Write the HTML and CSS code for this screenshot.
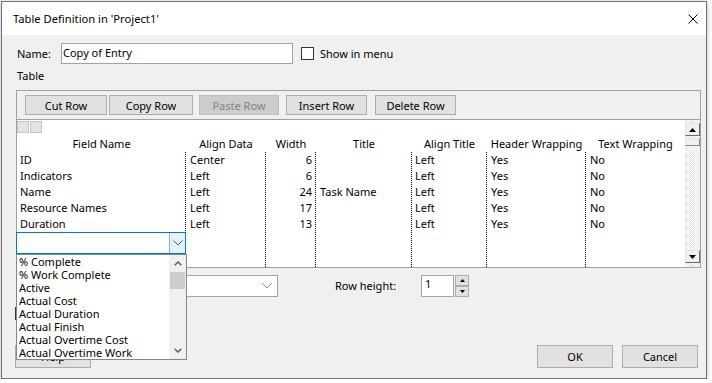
FILE: index.html
```html
<!DOCTYPE html>
<html lang="en">
<head>
    <meta charset="UTF-8">
    <meta name="viewport" content="width=device-width, initial-scale=1.0">
    <title>Table Definition</title>
    <link rel="stylesheet" href="styles.css">
</head>
<body>
    <div class="window">
        <div class="titlebar">
            <span class="title">Table Definition in 'Project1'</span>
            <svg class="close" width="10" height="10" viewBox="0 0 10 10">
                <path d="M0.5 0.5L9.5 9.5M9.5 0.5L0.5 9.5" stroke="#000" stroke-width="1" fill="none"/>
            </svg>
        </div>
        <div class="content">
            <div class="name-row">
                <span class="name-label">Name:</span>
                <div class="textbox name-box">Copy of Entry</div>
                <span class="checkbox"></span>
                <span class="check-label">Show in menu</span>
            </div>
            <div class="section-label">Table</div>

            <div class="frame">
                <div class="toolbar">
                    <button class="btn cut">Cut Row</button>
                    <button class="btn copy">Copy Row</button>
                    <button class="btn paste" disabled>Paste Row</button>
                    <button class="btn insert">Insert Row</button>
                    <button class="btn delete">Delete Row</button>
                </div>
                <div class="grid">
                    <div class="grid-main">
                        <div class="corner"><span class="sq"></span><span class="sq"></span></div>
                        <div class="cols">
                            <div class="col c1">
                                <div class="head">Field Name</div>
                                <div class="cells">
                                    <div class="cell">ID</div>
                                    <div class="cell">Indicators</div>
                                    <div class="cell">Name</div>
                                    <div class="cell">Resource Names</div>
                                    <div class="cell">Duration</div>
                                </div>
                            </div>
                            <div class="col c2">
                                <div class="head">Align Data</div>
                                <div class="cells">
                                    <div class="cell">Center</div>
                                    <div class="cell">Left</div>
                                    <div class="cell">Left</div>
                                    <div class="cell">Left</div>
                                    <div class="cell">Left</div>
                                </div>
                            </div>
                            <div class="col c3">
                                <div class="head">Width</div>
                                <div class="cells">
                                    <div class="cell">6</div>
                                    <div class="cell">6</div>
                                    <div class="cell">24</div>
                                    <div class="cell">17</div>
                                    <div class="cell">13</div>
                                </div>
                            </div>
                            <div class="col c4">
                                <div class="head">Title</div>
                                <div class="cells">
                                    <div class="cell"></div>
                                    <div class="cell"></div>
                                    <div class="cell">Task Name</div>
                                    <div class="cell"></div>
                                    <div class="cell"></div>
                                </div>
                            </div>
                            <div class="col c5">
                                <div class="head">Align Title</div>
                                <div class="cells">
                                    <div class="cell">Left</div>
                                    <div class="cell">Left</div>
                                    <div class="cell">Left</div>
                                    <div class="cell">Left</div>
                                    <div class="cell">Left</div>
                                </div>
                            </div>
                            <div class="col c6">
                                <div class="head">Header Wrapping</div>
                                <div class="cells">
                                    <div class="cell">Yes</div>
                                    <div class="cell">Yes</div>
                                    <div class="cell">Yes</div>
                                    <div class="cell">Yes</div>
                                    <div class="cell">Yes</div>
                                </div>
                            </div>
                            <div class="col c7">
                                <div class="head">Text Wrapping</div>
                                <div class="cells">
                                    <div class="cell">No</div>
                                    <div class="cell">No</div>
                                    <div class="cell">No</div>
                                    <div class="cell">No</div>
                                    <div class="cell">No</div>
                                </div>
                            </div>
                        </div>
                    </div>
                    <div class="vscroll">
                        <div class="sbtn">
                            <svg width="7" height="4" viewBox="0 0 7 4"><path d="M0 4H7L3.5 0Z" fill="#000"/></svg>
                        </div>
                        <div class="sthumb"></div>
                        <div class="strack"></div>
                        <div class="sbtn">
                            <svg width="7" height="4" viewBox="0 0 7 4"><path d="M0 0H7L3.5 4Z" fill="#000"/></svg>
                        </div>
                    </div>

                    <!-- cell editor with its open list -->
                    <div class="editor">
                        <div class="editor-text"></div>
                        <div class="editor-btn">
                            <svg width="10" height="6" viewBox="0 0 10 6"><polyline points="0.5,0.5 5,5 9.5,0.5" fill="none" stroke="#5a5a5a" stroke-width="1"/></svg>
                        </div>
                    </div>
                    <div class="dropdown">
                        <div class="items">
                            <div class="item">% Complete</div>
                            <div class="item">% Work Complete</div>
                            <div class="item">Active</div>
                            <div class="item">Actual Cost</div>
                            <div class="item">Actual Duration</div>
                            <div class="item">Actual Finish</div>
                            <div class="item">Actual Overtime Cost</div>
                            <div class="item">Actual Overtime Work</div>
                        </div>
                        <div class="list-scroll">
                            <div class="lbtn">
                                <svg width="8" height="5" viewBox="0 0 8 5"><polyline points="0.7,4.3 4,1 7.3,4.3" fill="none" stroke="#606060" stroke-width="1.5"/></svg>
                            </div>
                            <div class="lthumb"></div>
                            <div class="ltrack"></div>
                            <div class="lbtn">
                                <svg width="8" height="5" viewBox="0 0 8 5"><polyline points="0.7,0.7 4,4 7.3,0.7" fill="none" stroke="#606060" stroke-width="1.5"/></svg>
                            </div>
                        </div>
                    </div>
                </div>
            </div>

            <div class="options-row">
                <div class="combo">
                    <svg width="10" height="6" viewBox="0 0 10 6"><polyline points="0.5,0.5 5,5 9.5,0.5" fill="none" stroke="#8a8a8a" stroke-width="1"/></svg>
                </div>
                <span class="row-label">Row height:</span>
                <div class="textbox spin-input">1</div>
                <div class="spin">
                    <div class="spin-btn">
                        <svg width="5" height="3" viewBox="0 0 5 3"><path d="M0 3H5L2.5 0Z" fill="#000"/></svg>
                    </div>
                    <div class="spin-btn">
                        <svg width="5" height="3" viewBox="0 0 5 3"><path d="M0 0H5L2.5 3Z" fill="#000"/></svg>
                    </div>
                </div>
            </div>

            <div class="check-row">
                <span class="checkbox"></span>
            </div>

            <div class="button-row">
                <button class="btn dlg help">Help</button>
                <div class="right-buttons">
                    <button class="btn dlg">OK</button>
                    <button class="btn dlg">Cancel</button>
                </div>
            </div>
        </div>
    </div>
</body>
</html>
```

FILE: styles.css
```css
* {
    margin: 0;
    padding: 0;
    box-sizing: border-box;
}

body {
    font-family: "Noto Sans", sans-serif;
    font-size: 11px;
    line-height: 16px;
    color: #000;
    background-color: #fff;
}

.window {
    width: 706px;
    height: 378px;
    margin: 1px 0 0 1px;
    border: 1px solid #707070;
    background-color: #f0f0f0;
    box-shadow: 0 1px 6px rgba(0, 0, 0, 0.25);
}

.titlebar {
    height: 33px;
    background-color: #fff;
    display: flex;
    align-items: center;
    justify-content: space-between;
    padding: 0 8px 0 11px;
}

.title {
    font-size: 11.2px;
}

.content {
    padding: 8px 5px 0 14px;
}

/* name row */
.name-row {
    display: flex;
    align-items: center;
    height: 21px;
}

.name-label {
    width: 44px;
    margin-left: 1px;
}

.textbox {
    background-color: #fff;
    border: 1px solid #a3a3a3;
}

.name-box {
    width: 232px;
    height: 21px;
    padding-left: 1px;
    line-height: 17px;
}

.checkbox {
    display: inline-block;
    width: 13px;
    height: 13px;
    border: 1px solid #333;
    background-color: #fff;
}

.name-row .checkbox {
    margin-left: 8px;
}

.check-label {
    margin-left: 6px;
}

.section-label {
    margin-top: 4px;
    margin-left: 1px;
}

/* table frame */
.frame {
    margin-top: 6px;
    border: 1px solid #a0a0a0;
}

.toolbar {
    height: 28px;
    display: flex;
    padding: 4px 0 0 8px;
}

.btn {
    font-family: inherit;
    font-size: 11px;
    height: 20px;
    background-color: #e1e1e1;
    border: 1px solid #adadad;
    color: #000;
}

.btn:disabled {
    background-color: #cccccc;
    border-color: #bfbfbf;
    color: #838383;
}

.cut { width: 82px; }
.copy { width: 84px; margin-left: 2px; }
.paste { width: 80px; margin-left: 6px; }
.insert { width: 81px; margin-left: 7px; }
.delete { width: 81px; margin-left: 8px; }

.grid {
    position: relative;
    display: flex;
    height: 148px;
    border-top: 1px solid #a0a0a0;
    background-color: #fff;
}

.grid-main {
    flex: 1;
    display: flex;
    flex-direction: column;
}

.corner {
    height: 16px;
    display: flex;
    gap: 1px;
    padding-top: 1px;
}

.sq {
    width: 12px;
    height: 12px;
    background-color: #e4e4e4;
    border: 1px solid #c4c4c4;
}

.cols {
    flex: 1;
    display: flex;
}

.col {
    display: flex;
    flex-direction: column;
}

.head {
    height: 16px;
    text-align: center;
    white-space: nowrap;
}

.cells {
    flex: 1;
    border-right: 1px dotted #000;
}

.cell {
    height: 16px;
    white-space: nowrap;
}

.c1 { width: 169px; }
.c2 { width: 80px; }
.c3 { width: 50px; }
.c4 { width: 96px; }
.c5 { width: 75px; }
.c6 { width: 99px; }
.c7 { flex: 1; }

.c1 .cell { padding-left: 3px; }
.c2 .cell { padding-left: 4px; }
.c3 .cell { padding-right: 3px; text-align: right; }
.c4 .cell { padding-left: 4px; }
.c5 .cell { padding-left: 3px; }
.c6 .cell { padding-left: 4px; }
.c7 .cell { padding-left: 4px; }

.c7 .cells {
    border-right: none;
}

/* classic scrollbar of the grid */
.vscroll {
    width: 15px;
    display: flex;
    flex-direction: column;
    padding: 3px 0 4px;
    background: repeating-conic-gradient(#fff 0 25%, #e6e6e6 0 50%) 0 0 / 2px 2px;
}

.sbtn {
    height: 13px;
    display: flex;
    align-items: center;
    justify-content: center;
    background-color: #f0f0f0;
    border: 1px solid;
    border-color: #e3e3e3 #696969 #696969 #e3e3e3;
}

.sthumb {
    height: 8px;
    margin-top: 2px;
    background-color: #f0f0f0;
    border: 1px solid;
    border-color: #e3e3e3 #8a8a8a #8a8a8a #e3e3e3;
}

.strack {
    flex: 1;
}

/* floating editor over the grid */
.editor {
    position: absolute;
    top: 112px;
    left: -1px;
    width: 170px;
    height: 22px;
    display: flex;
    border: 1px solid #0078d7;
    background-color: #fff;
    z-index: 5;
}

.editor-text {
    flex: 1;
}

.editor-btn {
    width: 16px;
    display: flex;
    align-items: center;
    justify-content: center;
    background-color: #e5f1fb;
    border-left: 1px solid #7eb4ea;
}

.dropdown {
    position: absolute;
    top: 134px;
    left: -1px;
    width: 171px;
    height: 106px;
    display: flex;
    border: 1px solid #828790;
    background-color: #fff;
    z-index: 10;
}

.items {
    flex: 1;
}

.item {
    height: 13px;
    line-height: 13px;
    padding-left: 2px;
    white-space: nowrap;
}

.list-scroll {
    width: 17px;
    display: flex;
    flex-direction: column;
    background-color: #f0f0f0;
}

.lbtn {
    height: 17px;
    display: flex;
    align-items: center;
    justify-content: center;
}

.lthumb {
    height: 17px;
    margin: 0 1px;
    background-color: #cdcdcd;
}

.ltrack {
    flex: 1;
}

/* options under the table */
.options-row {
    display: flex;
    align-items: center;
    height: 22px;
    margin-top: 7px;
}

.combo {
    width: 178px;
    height: 22px;
    margin-left: 84px;
    display: flex;
    align-items: center;
    justify-content: flex-end;
    padding-right: 5px;
    background-color: #fff;
    border: 1px solid #a3a3a3;
}

.row-label {
    width: 86px;
    margin-left: 57px;
}

.spin-input {
    width: 33px;
    height: 22px;
    padding-left: 3px;
    line-height: 16px;
}

.spin {
    display: flex;
    flex-direction: column;
    margin-left: 1px;
}

.spin-btn {
    width: 14px;
    height: 11px;
    display: flex;
    align-items: center;
    justify-content: center;
    background-color: #e1e1e1;
    border: 1px solid #adadad;
}

.check-row {
    height: 13px;
    margin-top: 10px;
    margin-left: -1px;
    display: flex;
}

.button-row {
    display: flex;
    justify-content: space-between;
    margin-top: 25px;
    margin-right: 3px;
}

.right-buttons {
    display: flex;
    gap: 9px;
}

.dlg {
    width: 76px;
    height: 23px;
}

.help {
    margin-left: -1px;
}
```
